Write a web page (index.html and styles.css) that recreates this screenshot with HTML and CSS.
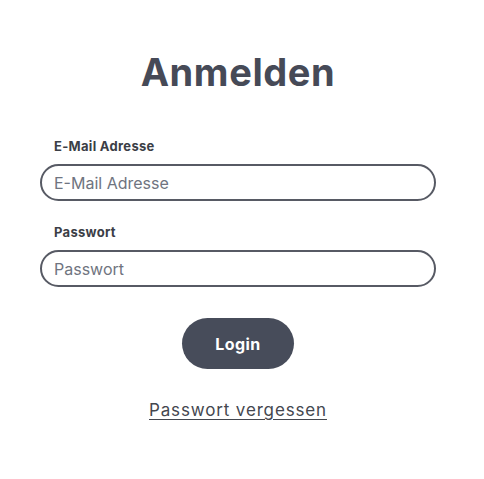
FILE: index.html
```html
<!DOCTYPE html>
<html lang="de">
<head>
<meta charset="utf-8">
<link rel="stylesheet" href="styles.css">
</head>
<body>
<main class="page">
  <form class="login">
    <h1 class="title">Anmelden</h1>
    <div class="field">
      <label class="label" for="email">E-Mail Adresse</label>
      <input class="input" id="email" type="email" placeholder="E-Mail Adresse">
    </div>
    <div class="field">
      <label class="label" for="pw">Passwort</label>
      <input class="input" id="pw" type="password" placeholder="Passwort">
    </div>
    <button class="btn" type="button">Login</button>
    <a class="forgot" href="#">Passwort vergessen</a>
  </form>
</main>
</body>
</html>
```
FILE: styles.css
```css
* { box-sizing: border-box; }
html, body { margin: 0; padding: 0; background: #fff; }
body { font-family: Inter, "Noto Sans", sans-serif; color: #3a3d45; }
.page { padding: 50px 0 0 40px; }
.login { width: 396px; display: flex; flex-direction: column; }
.title {
  margin: 0 0 44px;
  text-align: center;
  font-size: 38px;
  line-height: 44px;
  font-weight: 700;
  color: #464a57;
  letter-spacing: 0.6px;
}
.field { display: flex; flex-direction: column; margin-bottom: 23px; }
.label {
  padding-left: 14px;
  font-size: 13px;
  line-height: 16px;
  font-weight: 700;
  color: #3b3e46;
  margin-bottom: 10px;
  letter-spacing: 0.3px;
}
.input {
  height: 37px;
  border: 2px solid #575a64;
  border-radius: 19px;
  padding: 0 12px;
  font-family: inherit;
  font-size: 16px;
  color: #333;
  outline: none;
  background: #fff;
}
.input::placeholder { color: #6f7480; }
.btn {
  align-self: center;
  margin-top: 8px;
  width: 112px;
  height: 51px;
  border: 0;
  border-radius: 26px;
  background: #474c5a;
  color: #fff;
  font-family: inherit;
  font-size: 16px;
  font-weight: 700;
  letter-spacing: 0.4px;
  cursor: pointer;
}
.forgot {
  align-self: center;
  margin-top: 30px;
  font-size: 17px;
  line-height: 22px;
  color: #44474f;
  letter-spacing: 0.85px;
  text-decoration: underline;
  text-underline-offset: 3px;
}
```
